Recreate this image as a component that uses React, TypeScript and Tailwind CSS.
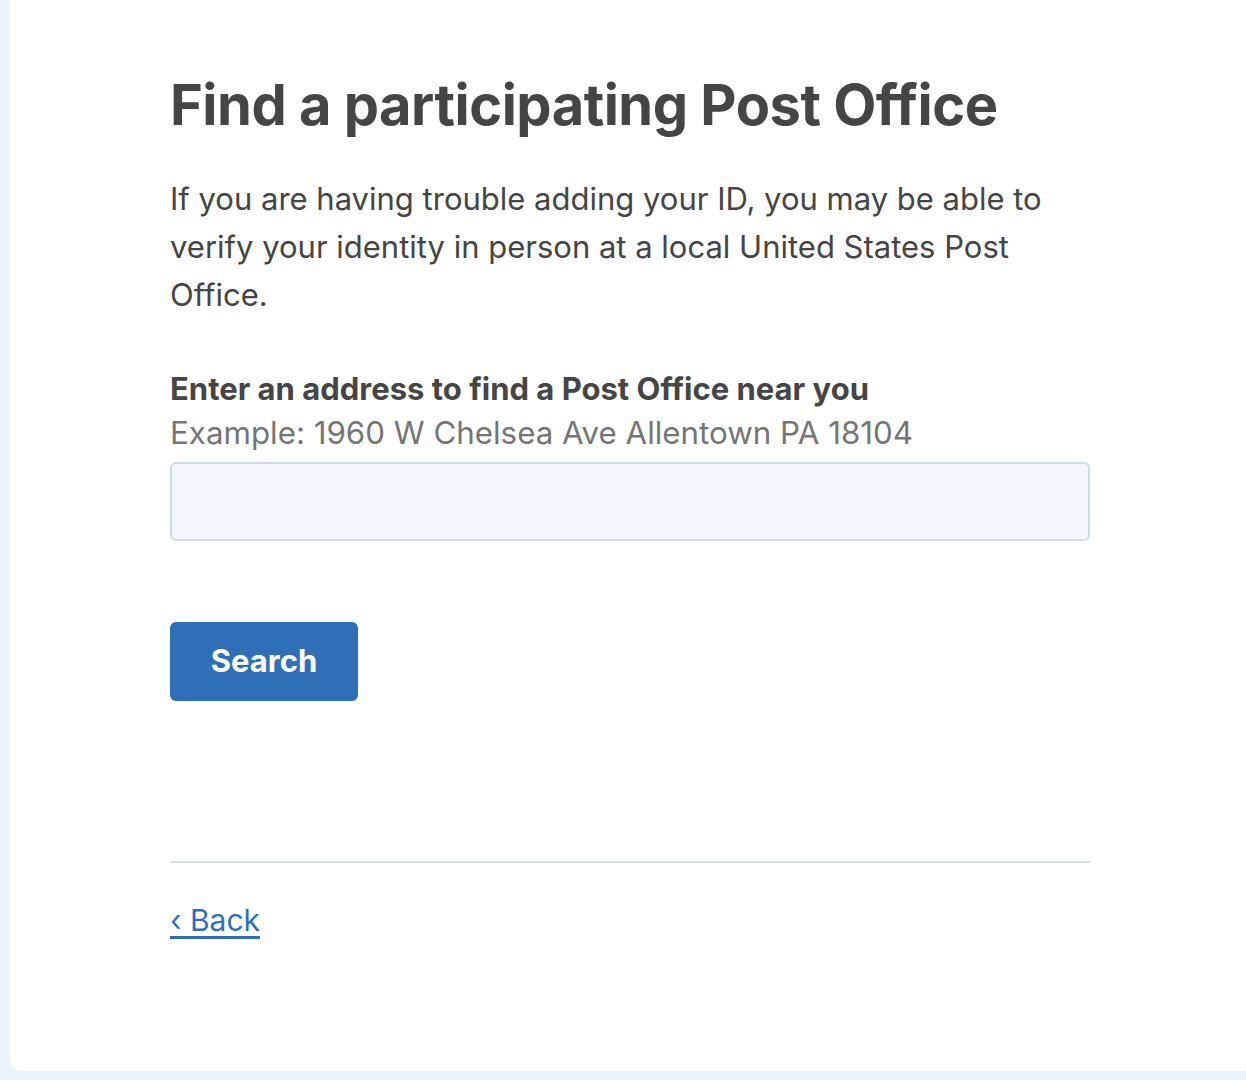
export default function App() {
  return (
    <div className="h-[1080px] w-[1246px] overflow-hidden bg-[#ebf3fa] font-['Inter',_'Liberation_Sans',_sans-serif] text-[#454545]">
      <div className="ml-[10px] h-[1071px] w-[1250px] rounded-b-[12px] bg-white">
        <div className="w-[920px] pl-[160px] pt-[73px] box-content">
          <h1 className="text-[56px] font-bold leading-[64px] tracking-[-0.5px]">
            Find a participating Post Office
          </h1>
          <p className="mt-[38px] text-[31px] leading-[48px]">
            If you are having trouble adding your ID, you may be able to verify your identity in person at a local United
            States Post Office.
          </p>
          <label htmlFor="address" className="mt-[48px] block text-[31px] font-bold leading-[44px]">
            Enter an address to find a Post Office near you
          </label>
          <div className="text-[31.3px] leading-[44px] text-[#757575]">Example: 1960 W Chelsea Ave Allentown PA 18104</div>
          <input
            id="address"
            type="text"
            className="mt-[7px] block h-[79px] w-full rounded-[6px] border-2 border-[#ccd9e8] bg-[#f2f7fd] px-4 text-[30px] outline-none"
          />
          <button className="mt-[81px] h-[79px] w-[188px] rounded-[6px] bg-[#2f6fb7] text-[31px] font-bold text-white">
            Search
          </button>
          <hr className="mt-[160px] border-t-2 border-[#d5dde8]" />
          <a href="#" className="mt-[35px] inline-block text-[30px] leading-[44px] text-[#2f6fb7] underline underline-offset-[5px]">
            ‹ Back
          </a>
        </div>
      </div>
    </div>
  );
}
